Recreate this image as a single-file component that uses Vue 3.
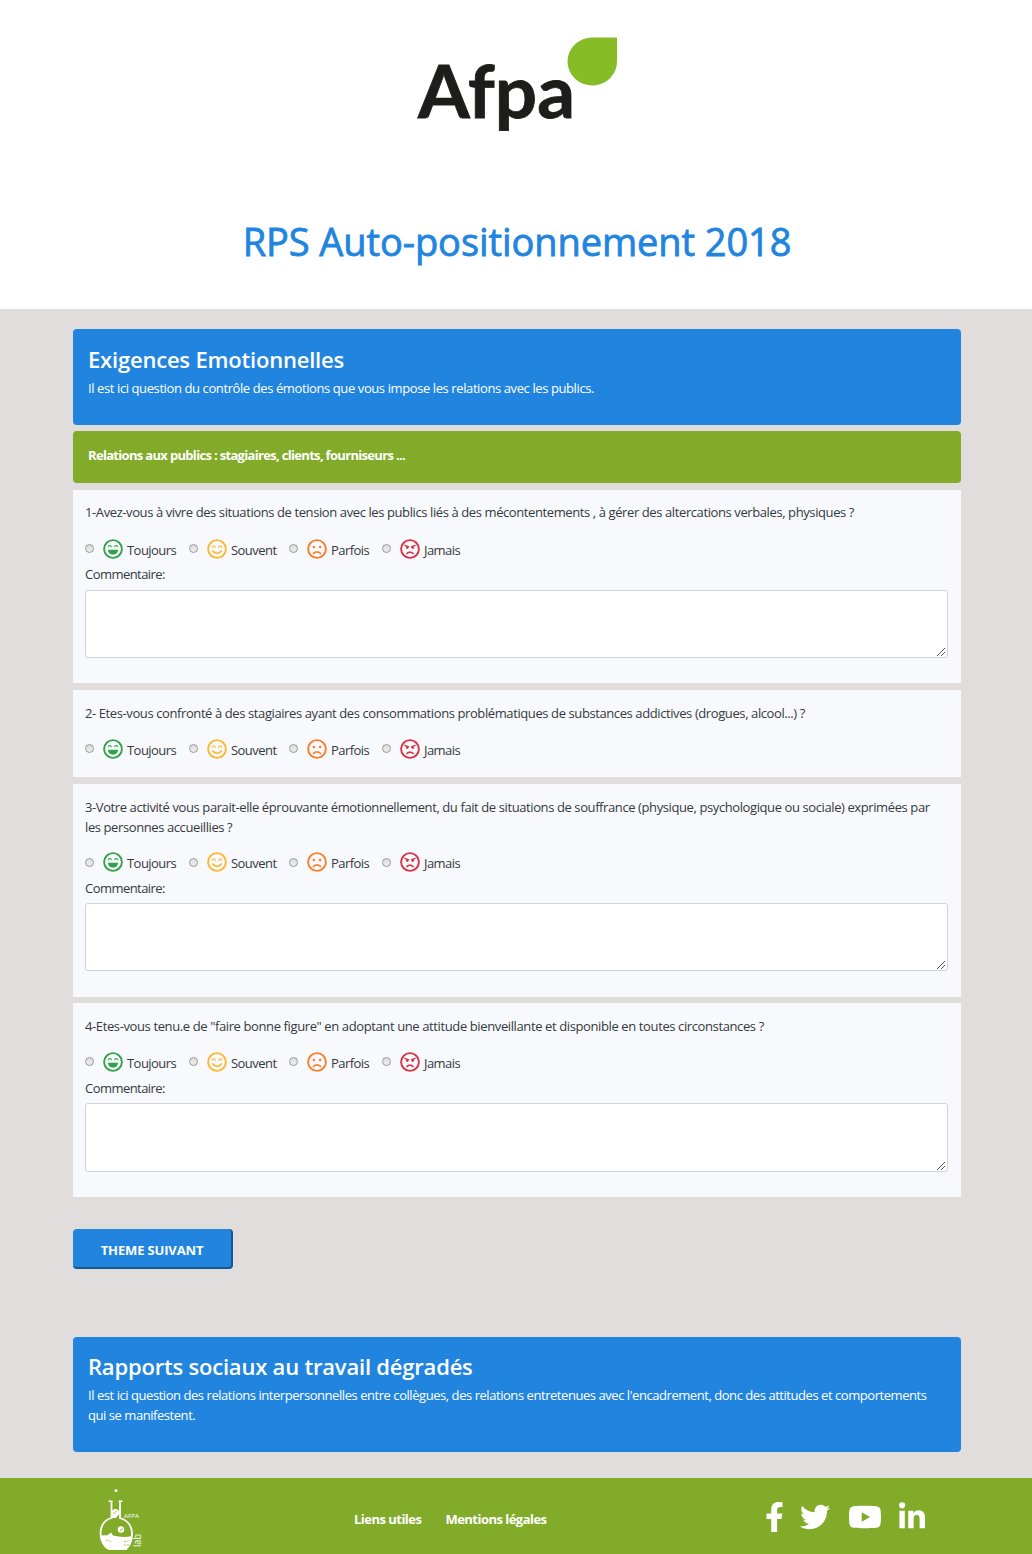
<script setup>
const moods = [
  { name: 'toujours', label: 'Toujours' },
  { name: 'souvent', label: 'Souvent' },
  { name: 'parfois', label: 'Parfois' },
  { name: 'jamais', label: 'Jamais' },
]

const questions = [
  { id: 'q1', comment: true, lines: ['1-Avez-vous à vivre des situations de tension avec les publics liés à des mécontentements , à gérer des altercations verbales, physiques ?'] },
  { id: 'q2', comment: false, lines: ['2- Etes-vous confronté à des stagiaires ayant des consommations problématiques de substances addictives (drogues, alcool...) ?'] },
  { id: 'q3', comment: true, lines: ['3-Votre activité vous parait-elle éprouvante émotionnellement, du fait de situations de souffrance (physique, psychologique ou sociale) exprimées par', 'les personnes accueillies ?'] },
  { id: 'q4', comment: true, lines: ['4-Etes-vous tenu.e de "faire bonne figure" en adoptant une attitude bienveillante et disponible en toutes circonstances ?'] },
]
</script>

<template>
  <div class="page">
    <header class="header">
      <svg class="logo" viewBox="0 0 200 104" width="200" height="104" role="img" aria-label="Afpa">
        <text class="logo-text" x="0" y="83" textLength="157" lengthAdjust="spacingAndGlyphs">Afpa</text>
        <path d="M174 2.500H199V26A24.750 24 0 1 1 174 2.500Z" fill="#86bc25" />
      </svg>
      <h1>RPS Auto-positionnement 2018</h1>
    </header>

    <main class="content">
      <section class="theme first">
        <h2>Exigences Emotionnelles</h2>
        <p>Il est ici question du contrôle des émotions que vous impose les relations avec les publics.</p>
      </section>
      <div class="subtheme">Relations aux publics : stagiaires, clients, fourniseurs ...</div>

      <section v-for="q in questions" :key="q.id" class="card" :class="q.id">
        <p class="question"><span v-for="line in q.lines" :key="line">{{ line }}</span></p>
        <div class="answers">
          <label v-for="m in moods" :key="m.name" :class="m.name">
            <span class="radio"></span>
            <svg class="face" viewBox="0 0 20 20" fill="none" stroke="currentColor" stroke-width="1.900" stroke-linecap="round">
              <circle cx="10" cy="10" r="8.900" />
              <template v-if="m.name === 'toujours'">
                <path d="M5.300 7.600Q6.800 5.500 8.300 7.600M11.700 7.600Q13.200 5.500 14.700 7.600" stroke-width="1.100" />
                <path d="M4.800 10.800H15.200Q14.400 15.700 10 15.700T4.800 10.800Z" fill="currentColor" stroke="none" />
              </template>
              <template v-else-if="m.name === 'souvent'">
                <path d="M5.200 8.200Q6.800 5.600 8.400 8.200M11.600 8.200Q13.200 5.600 14.800 8.200" stroke-width="1.200" />
                <path d="M5.800 12.200Q10 16.600 14.200 12.200" stroke-width="1.700" />
              </template>
              <template v-else-if="m.name === 'parfois'">
                <circle cx="6.900" cy="8" r="1.250" fill="currentColor" stroke="none" />
                <circle cx="13.100" cy="8" r="1.250" fill="currentColor" stroke="none" />
                <path d="M6.500 14.400Q10 11.200 13.500 14.400" stroke-width="1.700" />
              </template>
              <template v-else>
                <path d="M4.900 6.400L8.500 7.900M15.100 6.400L11.500 7.900" stroke-width="1.300" />
                <circle cx="7.200" cy="8.600" r="1.300" fill="currentColor" stroke="none" />
                <circle cx="12.800" cy="8.600" r="1.300" fill="currentColor" stroke="none" />
                <path d="M7 14.400Q10 11.800 13 14.400" stroke-width="1.700" />
              </template>
            </svg>
            <span class="name">{{ m.label }}</span>
          </label>
        </div>
        <template v-if="q.comment">
          <div class="comment-label">Commentaire:</div>
          <div class="textarea">
            <svg viewBox="0 0 10 10" width="10" height="10" stroke="#555" stroke-width="1"><path d="M1 9L9 1M5 9L9 5" /></svg>
          </div>
        </template>
      </section>

      <button class="next" type="button">THEME SUIVANT</button>

      <section class="theme second">
        <h2>Rapports sociaux au travail dégradés</h2>
        <p>Il est ici question des relations interpersonnelles entre collègues, des relations entretenues avec l'encadrement, donc des attitudes et comportements<br>qui se manifestent.</p>
      </section>
    </main>

    <footer class="footer">
      <svg class="flask" viewBox="0 0 46 66" width="46" height="66" fill="none" stroke="#fff">
        <circle cx="17" cy="6.500" r="1.500" fill="#fff" stroke="none" />
        <path d="M9.500 17.200H13.500M19.500 17.200H23.500" stroke-width="1.500" />
        <path d="M12.500 17V34C5 36 1.500 42.500 1.500 49C1.500 57 6 64 10 65H27C30 63 33 57 33 50C33 42 29 36.500 21 34V17" stroke-width="1.800" />
        <circle cx="16.500" cy="28.500" r="3.600" fill="#fff" stroke="none" />
        <path d="M14.500 30L18 26.500" stroke="#81ab29" stroke-width=".8" />
        <path d="M13 30H20L17 34H13Z" fill="#fff" stroke="none" />
        <circle cx="22" cy="45.500" r="3.200" fill="#fff" stroke="none" />
        <path d="M21 46.500L24 44.500" stroke="#81ab29" stroke-width=".8" />
        <path d="M1 52Q4 51 8 51.500L12 48.500L14 51.500Q24 54 33 52Q31 62 27 66H10Q2 61 1 52Z" fill="#fff" stroke="none" />
        <path d="M7 56L13 57.500M25 58L31 56.500M25 61L31 61" stroke="#81ab29" stroke-width=".7" stroke-dasharray="2 1" />
        <text class="flask-text" x="25" y="34" textLength="15" lengthAdjust="spacingAndGlyphs">AFPA</text>
        <text class="flask-text side" transform="translate(41.500 63) rotate(-90)" textLength="13" lengthAdjust="spacingAndGlyphs">lab</text>
      </svg>
      <nav class="links">
        <a>Liens utiles</a>
        <a>Mentions légales</a>
      </nav>
      <div class="social">
        <svg class="fb" viewBox="0 0 320 512" fill="#fff"><path d="M279.140 288l14.220-92.660h-88.910v-60.130c0-25.350 12.420-50.060 52.240-50.060h40.420V6.260S260.430 0 225.360 0c-73.220 0-121.080 44.380-121.080 124.720v70.620H22.890V288h81.390v224h100.170V288z" /></svg>
        <svg class="tw" viewBox="0 0 512 512" fill="#fff"><path d="M459.370 151.716c.325 4.548.325 9.097.325 13.645 0 138.720-105.583 298.558-298.558 298.558-59.452 0-114.680-17.219-161.137-47.106 8.447.974 16.568 1.299 25.340 1.299 49.055 0 94.213-16.568 130.274-44.832-46.132-.975-84.792-31.188-98.112-72.772 6.498.974 12.995 1.624 19.818 1.624 9.421 0 18.843-1.300 27.614-3.573-48.081-9.747-84.143-51.980-84.143-102.985v-1.299c13.969 7.797 30.214 12.670 47.431 13.319-28.264-18.843-46.781-51.005-46.781-87.391 0-19.492 5.197-37.360 14.294-52.954 51.655 63.675 129.300 105.258 216.365 109.807-1.624-7.797-2.599-15.918-2.599-24.040 0-57.828 46.782-104.934 104.934-104.934 30.213 0 57.502 12.670 76.670 33.137 23.715-4.548 46.456-13.320 66.599-25.340-7.798 24.366-24.366 44.833-46.132 57.827 21.117-2.273 41.584-8.122 60.426-16.243-14.292 20.791-32.161 39.308-52.628 54.253z" /></svg>
        <svg class="yt" viewBox="0 0 576 512" fill="#fff"><path d="M549.655 124.083c-6.281-23.650-24.787-42.276-48.284-48.597C458.781 64 288 64 288 64S117.220 64 74.629 75.486c-23.497 6.322-42.003 24.947-48.284 48.597-11.412 42.867-11.412 132.305-11.412 132.305s0 89.438 11.412 132.305c6.281 23.650 24.787 41.500 48.284 47.821C117.220 448 288 448 288 448s170.780 0 213.371-11.486c23.497-6.321 42.003-24.171 48.284-47.821 11.412-42.867 11.412-132.305 11.412-132.305s0-89.438-11.412-132.305zM232.145 337.591V175.185l142.739 81.205-142.739 81.201z" /></svg>
        <svg class="li" viewBox="0 0 448 512" fill="#fff"><path d="M100.280 448H7.400V148.900h92.880zM53.790 108.100C24.090 108.100 0 83.500 0 53.800a53.790 53.790 0 0 1 107.580 0c0 29.700-24.100 54.300-53.790 54.300zM447.900 448h-92.680V302.400c0-34.700-.7-79.200-48.290-79.200-48.290 0-55.690 37.700-55.690 76.700V448h-92.780V148.900h89.080v40.800h1.300c12.400-23.500 42.690-48.300 87.880-48.300 94 0 111.280 61.900 111.280 142.300V448z" /></svg>
      </div>
    </footer>
  </div>
</template>

<style>
body {
  margin: 0;
}
</style>

<style scoped>
* {
  box-sizing: border-box;
}
.page {
  width: 1032px;
  height: 1554px;
  display: flex;
  flex-direction: column;
  background: #e1dddc;
  font: 13px/19.5px "Open Sans", "Noto Sans", sans-serif;
  color: #343a40;
  white-space: nowrap;
}
h1, h2, p {
  margin: 0;
}
.header {
  height: 309px;
  flex: none;
  background: #fff;
  display: flex;
  flex-direction: column;
  align-items: center;
}
.logo {
  margin: 35px 0 0 3px;
  flex: none;
  overflow: visible;
}
.logo-text {
  font: 700 72px Lato, sans-serif;
  fill: #1d1d1b;
  stroke: #1d1d1b;
  stroke-width: .8px;
}
h1 {
  margin: 74px 0 0 2px;
  font-size: 38px;
  line-height: 56px;
  font-weight: 400;
  letter-spacing: -.08px;
  color: #2185df;
  -webkit-text-stroke: .8px #2185df;
}
.content {
  flex: 1;
  width: 888px;
  margin-left: 73px;
  padding-top: 20px;
}
.theme {
  background: #2185df;
  color: #fff;
  border-radius: 4px;
  padding: 16px 15px 0;
}
.theme p {
  letter-spacing: -.4px;
  margin-top: 6px;
}
h2 {
  font-size: 22px;
  line-height: 28px;
  font-weight: 600;
  letter-spacing: -.2px;
}
.first {
  height: 96px;
}
.subtheme {
  height: 52px;
  margin: 6px 0 7px;
  padding: 15px 15px 0;
  background: #81ab29;
  border-radius: 4px;
  color: #fff;
  font-weight: 700;
  letter-spacing: -.68px;
}
.card {
  background: #f8f9fc;
  padding: 14px 13px 0 12px;
  margin-bottom: 7px;
}
.q1 {
  height: 193px;
  padding-top: 13px;
}
.q2 {
  height: 87px;
}
.q3 {
  height: 213px;
  margin-bottom: 6px;
}
.q4 {
  height: 194px;
  margin-bottom: 32px;
}
.question {
  letter-spacing: -.4px;
}
.q4 .question {
  letter-spacing: -.385px;
}
.question span {
  display: block;
}
.answers {
  display: flex;
  height: 20px;
  margin-top: 15px;
}
.q1 .answers {
  margin-top: 16px;
}
label {
  display: flex;
  align-items: center;
}
.toujours { width: 104px; color: #32a34a; }
.souvent { width: 100px; color: #fbb931; }
.parfois { width: 93px; color: #f5802f; }
.jamais { color: #d43547; }
.radio {
  width: 9px;
  height: 9px;
  border: 1px solid #999;
  border-radius: 50%;
  background: linear-gradient(#ddd, #eee);
}
.face {
  width: 20px;
  height: 20px;
  margin: 0 4px 0 9px;
}
.name {
  color: #343a40;
  letter-spacing: -.55px;
  padding-top: 4px;
}
.comment-label {
  margin-top: 6px;
  letter-spacing: -.55px;
}
.q3 .comment-label,
.q4 .comment-label {
  margin-top: 7px;
}
.textarea {
  height: 68px;
  margin-top: 6px;
  border: 1px solid #ced4da;
  border-radius: 3px;
  background: #fff;
  display: flex;
  align-items: flex-end;
  justify-content: flex-end;
  padding-right: 1px;
}
.q3 .textarea {
  margin-top: 4px;
}
.q4 .textarea {
  margin-top: 5px;
  height: 69px;
}
.next {
  display: block;
  width: 160px;
  height: 40px;
  border: 0 solid #16578f;
  border-width: 0 2px 2px 0;
  border-radius: 4px;
  background: #2185df;
  color: #fff;
  font: 700 13px/20px "Open Sans", sans-serif;
  letter-spacing: -.15px;
  padding: 4px 0 0;
}
.second {
  height: 115px;
  margin-top: 68px;
  padding-top: 15px;
}
.second p {
  letter-spacing: -.448px;
}
.footer {
  height: 76px;
  flex: none;
  background: #81ab29;
  display: flex;
  color: #fff;
}
.flask {
  margin: 6px 0 0 99px;
}
.flask-text {
  font: 6px "Open Sans", sans-serif;
  fill: #fff;
  stroke: none;
}
.side {
  font-size: 10px;
}
.links {
  display: flex;
  gap: 24px;
  margin: 32px 0 0 209px;
  width: 411px;
  font-weight: 700;
  letter-spacing: -.52px;
}
.social {
  display: flex;
  align-items: flex-start;
}
.fb { width: 19px; height: 30px; margin-top: 24px; }
.tw { width: 30px; height: 30px; margin: 24px 0 0 16px; }
.yt { width: 34px; height: 30px; margin: 24px 0 0 18px; }
.li { width: 26px; height: 30px; margin: 24px 0 0 17px; }
</style>
